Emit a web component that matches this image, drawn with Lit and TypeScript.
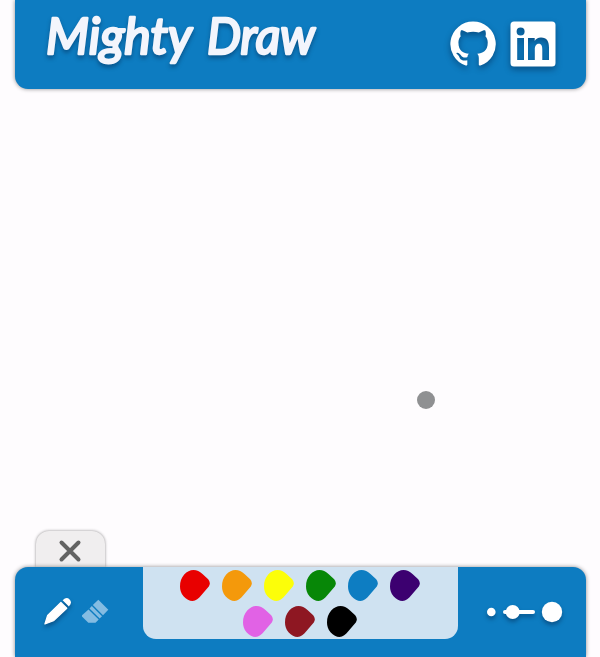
import { LitElement, html, css } from "lit";
import { customElement } from "lit/decorators.js";

const COLORS = ["#e80000", "#f4990b", "#fcfe09", "#078707", "#0d7dc2", "#3c0070", "#e162e5", "#8e1722", "#000000"];

@customElement("color-palette")
class ColorPalette extends LitElement {
  static styles = css`
    :host { display: flex; flex-wrap: wrap; justify-content: center; align-content: flex-start;
      box-sizing: border-box; width: 315px; height: 72px; padding: 3px 30px 0 29px; gap: 4.5px 12px;
      background: #cfe2f1; border-radius: 0 0 13px 13px; }
    svg { display: block; width: 30px; height: 31px; }
  `;
  render() {
    return COLORS.map((c) => html`<svg viewBox="0 0 30 31" fill=${c}>
      <path d="M13.5 0C17 0 19.5 1.2 22.5 4L28.2 9.3Q31.2 13 28.8 16.4L21.5 25C18.5 28.5 16 31 12.5 31C9.5 31 6.3 29.2 3.5 26.2C1 23.2 0 20 0 16.5C0 12 1.2 8 4.2 4.6C7 1.5 10 0 13.5 0Z" />
    </svg>`);
  }
}

@customElement("app-root")
class AppRoot extends LitElement {
  static styles = css`
    :host { display: flex; flex-direction: column; width: 600px; height: 657px; box-sizing: border-box;
      padding: 0 14px 0 15px; background: #fefcfe; overflow: hidden; position: relative; }
    svg { display: block; overflow: visible; }
    header { display: flex; justify-content: space-between; height: 89px; background: #0d7cc1;
      border-radius: 0 0 13px 13px; box-shadow: 0 0 4px rgba(0,0,0,.45); }
    .title { width: 330px; height: 89px; font-family: Lato, sans-serif; font-style: italic;
      font-weight: 400; font-size: 50px; fill: #f3f5fc; stroke: #f3f5fc; stroke-width: 2.6;
      stroke-linejoin: round; filter: drop-shadow(0 3px 2px rgba(0,25,60,.4)); }
    .links { display: flex; gap: 14px; padding: 21px 30px 0 0; }
    .links svg { width: 46px; height: 46px; fill: #fff; filter: drop-shadow(0 3px 3px rgba(0,25,60,.45)); }
    main { flex: 1; }
    .tab { display: flex; justify-content: center; align-items: center; box-sizing: border-box;
      width: 69px; height: 36px; margin-left: 21px; padding: 4px 1px 0 0; background: #f0eeef;
      border-radius: 13px 13px 0 0; box-shadow: 0 0 3px rgba(0,0,0,.45); }
    .toolbar { display: flex; justify-content: space-between; height: 90px; background: #0d7cc1;
      border-radius: 13px 13px 0 0; box-shadow: 0 0 4px rgba(0,0,0,.45); z-index: 1; }
    .tools, .sizes { width: 128px; height: 90px; }
    .lift { filter: drop-shadow(0 3px 2px rgba(0,25,60,.4)); }
    .cursor { position: absolute; left: 417px; top: 391px; width: 18px; height: 18px;
      border-radius: 50%; background: #8f9092; }
  `;
  render() {
    return html`
      <header>
        <svg class="title">
          <text x="31" y="54" textLength="146" lengthAdjust="spacingAndGlyphs">Mighty</text>
          <text x="192" y="54" textLength="108" lengthAdjust="spacingAndGlyphs">Draw</text>
        </svg>
        <nav class="links">
          <svg viewBox="0 0 16 16"><path d="M8 .2a7.85 7.85 0 0 0-2.53 15.29c.4.07.55-.17.55-.38v-1.49c-2.01.37-2.53-.49-2.69-.94-.09-.23-.48-.94-.82-1.13-.28-.15-.68-.52-.01-.53.63-.01 1.08.58 1.23.82.72 1.21 1.87.87 2.33.66.07-.52.28-.87.51-1.07-1.78-.2-3.64-.89-3.64-3.95 0-.87.31-1.59.82-2.15-.08-.2-.36-1.02.08-2.12 0 0 .67-.21 2.2.82a7.4 7.4 0 0 1 4 0c1.53-1.04 2.2-.82 2.2-.82.44 1.1.16 1.92.08 2.12.51.56.82 1.27.82 2.15 0 3.07-1.87 3.75-3.65 3.95.29.25.54.73.54 1.48v2.2c0 .21.15.46.55.38A7.85 7.85 0 0 0 8 .2Z" /></svg>
          <svg viewBox="0 0 46 46"><path fill-rule="evenodd" d="M4 .5H42Q45.5.5 45.5 4V42Q45.5 45.5 42 45.5H4Q.5 45.5.5 42V4Q.5.5 4 .5ZM7.2 17V39H14V17ZM10.6 6.5A4 4 0 1 0 10.6 14.5A4 4 0 1 0 10.6 6.5ZM18 17V39H24.8V28.3C24.8 25.3 26 22.7 28.8 22.7S32.3 25.2 32.3 28.5V39H39V27C39 20.3 37 16.5 31 16.5C28 16.5 25.8 18 24.7 20V17Z" /></svg>
        </nav>
      </header>
      <main></main>
      <div class="tab">
        <svg width="22" height="22"><path d="M2.5 2.5L19.5 19.5M19.5 2.5L2.5 19.5" stroke="#626262" stroke-width="4" stroke-linecap="round" /></svg>
      </div>
      <div class="toolbar">
        <svg class="tools" viewBox="15 567 128 90">
          <g class="lift" fill="#fff">
            <path d="M44.9 624L47.6 615.5L60.9 602.5L66.8 608.3L53.5 620.8Z" stroke="#fff" stroke-width="1.2" stroke-linejoin="round" />
            <path d="M62.6 600.3L64.5 598.7Q67 597 69.4 599.2Q71.8 601.6 70.4 604.2L68.9 606.4Z" />
          </g>
          <g fill="#84bce2">
            <path d="M98.3 599.7L108.3 609.7L103 615.3L92.8 605.1Z" />
            <path d="M91.8 606.1L102 616.3L99.7 618.6L89.5 608.4Z" />
            <path d="M88.5 609.4L98.7 619.6L95.5 622.8H88.3L82 616.5V615.3Z" />
          </g>
        </svg>
        <color-palette></color-palette>
        <svg class="sizes" viewBox="458 567 128 90">
          <g class="lift" fill="#fff">
            <circle cx="491.3" cy="612" r="4.3" />
            <rect x="503" y="610" width="32" height="4" rx="2" />
            <circle cx="512.7" cy="612" r="7" />
            <circle cx="552" cy="612" r="10.2" />
          </g>
        </svg>
      </div>
      <div class="cursor"></div>
    `;
  }
}
